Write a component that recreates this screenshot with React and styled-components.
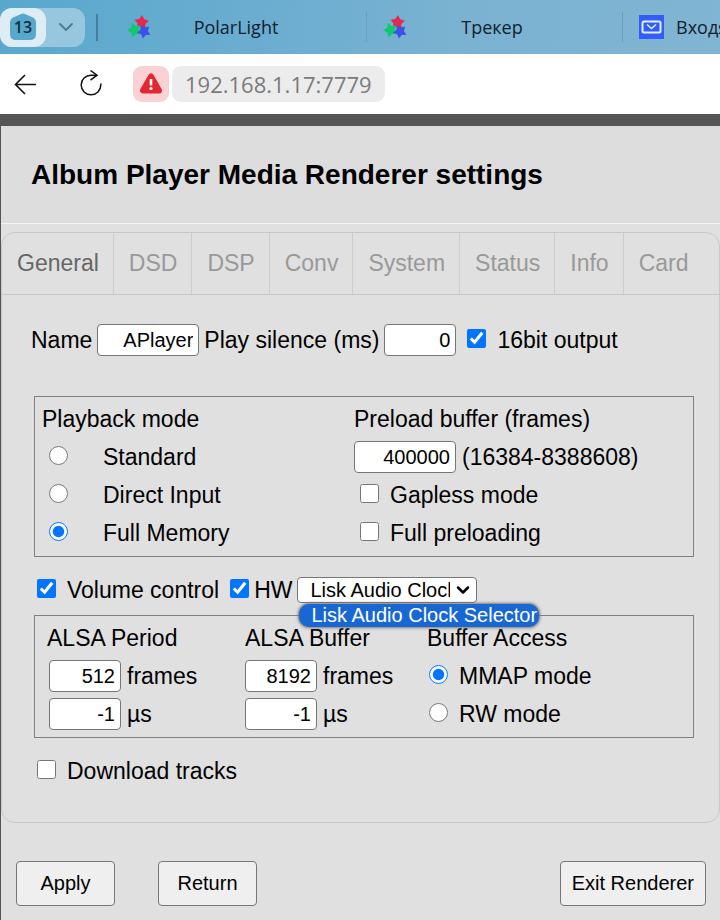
import React from 'react'
import styled, { createGlobalStyle } from 'styled-components';
import { ChevronDown } from 'lucide-react';

const tabs = ['General', 'DSD', 'DSP', 'Conv', 'System', 'Status', 'Info', 'Card'];

// five-pointed star, angle is the direction of the first tip in degrees
const star = (cx, cy, r, angle) => {
  const points = [];
  for (let i = 0; i < 10; i++) {
    const a = ((angle + i * 36) * Math.PI) / 180;
    const radius = i % 2 ? r * 0.55 : r;
    points.push(`${cx + radius * Math.cos(a)},${cy + radius * Math.sin(a)}`);
  }
  return points.join(' ');
}

const StarsIcon = () => (
  <svg width='24' height='24' viewBox='0 0 24 24'>
    <polygon fill='#e5284c' points={star(14.5, 7.5, 7.5, -86)} />
    <polygon fill='#0fc96a' points={star(7.5, 15, 7.5, 178)} />
    <polygon fill='#3d50e8' points={star(17, 16.5, 7.2, -45)} />
  </svg>
)

const BrowserTabs = () => {
  return (
    <TabStrip>
      <Workspace>
        <WorkspaceButton aria-label='Workspace'>
          <Hexagon>
            <svg width='26' height='28' viewBox='0 0 26 28'>
              <path fill='#58a7cc' d='M10.500 1.200a5 5 0 0 1 5 0l8 3.600Q26 6.500 26 9v12q0 6-6 6H6q-6 0-6-6V9q0-2.500 2.500-4.200z' />
            </svg>
            <span>13</span>
          </Hexagon>
        </WorkspaceButton>
        <WorkspaceMenu aria-label='Tab menu'><ChevronDown size={24} strokeWidth={2} /></WorkspaceMenu>
      </Workspace>
      <Divider />
      <BrowserTab><StarsIcon /><TabTitle>PolarLight</TabTitle></BrowserTab>
      <BrowserTab $line><StarsIcon /><TabTitle>Трекер</TabTitle></BrowserTab>
      <BrowserTab $line $left>
        <svg width='25' height='24' viewBox='0 0 25 24'>
          <rect width='25' height='24' fill='#315efb' />
          <rect x='3.500' y='6.500' width='18' height='11' rx='1.500' fill='none' stroke='#e8edff' strokeWidth='2' />
          <path d='M8 9.500l4.500 4 4.500-4' fill='none' stroke='#e8edff' strokeWidth='1.500' />
        </svg>
        <TabTitle $left>Входящие</TabTitle>
      </BrowserTab>
    </TabStrip>
  )
}

const AddressBar = () => {
  return (
    <Toolbar>
      <IconButton aria-label='Back'>
        <svg width='24' height='24' viewBox='0 0 24 24' fill='none' stroke='#111' strokeWidth='1.600'>
          <path d='M12 3l-9.500 9.500L12 22M2.500 12.500H23' />
        </svg>
      </IconButton>
      <IconButton aria-label='Reload'>
        <svg width='24' height='28' viewBox='0 0 24 28' fill='none' stroke='#111' strokeWidth='1.500'>
          <path d='M18 5.200H12A9.800 9.800 0 1 0 21.800 15v-1.500' />
          <path d='M11.500 0.500l6.500 4.700-6.500 5' />
        </svg>
      </IconButton>
      <Warning aria-label='Not secure'>
        <svg width='24' height='22' viewBox='0 0 24 22'>
          <path d='M12 3.500L4 17.500h16z' fill='#e12731' stroke='#e12731' strokeWidth='6' strokeLinejoin='round' />
          <path d='M12 6v6.500' stroke='#fff' strokeWidth='2.600' />
          <circle cx='12' cy='15.500' r='1.600' fill='#fff' />
        </svg>
      </Warning>
      <Address href='http://192.168.1.17:7779'>192.168.1.17:7779</Address>
    </Toolbar>
  )
}

const General = () => {
  return (
    <>
      <Row $first>
        <label htmlFor='name'>Name</label>
        <Field id='name' $wide defaultValue='APlayer' />
        <label htmlFor='silence'>Play silence (ms)</label>
        <Field id='silence' defaultValue='0' />
        <Option $inset><Check type='checkbox' defaultChecked />16bit output</Option>
      </Row>

      <Group $cols='312px 1fr' $indent='7px'>
        <Column>
          <Line>Playback mode</Line>
          <Option $mode><Check type='radio' name='mode' />Standard</Option>
          <Option $mode><Check type='radio' name='mode' />Direct Input</Option>
          <Option $mode><Check type='radio' name='mode' defaultChecked />Full Memory</Option>
        </Column>
        <Column>
          <Line as='label' htmlFor='preload'>Preload buffer (frames)</Line>
          <Line><Field id='preload' $wide defaultValue='400000' />(16384-8388608)</Line>
          <Option $inset><Check type='checkbox' />Gapless mode</Option>
          <Option $inset><Check type='checkbox' />Full preloading</Option>
        </Column>
      </Group>

      <Row>
        <Option><Check type='checkbox' defaultChecked />Volume control</Option>
        <Option $inset $tight><Check type='checkbox' defaultChecked />HW</Option>
        <SelectBox>
          <Select aria-label='Volume control element'>
            <option>Lisk Audio Clock Selector</option>
          </Select>
          <ChevronDown size={20} strokeWidth={3} />
          <Dropdown>Lisk Audio Clock Selector</Dropdown>
        </SelectBox>
      </Row>

      <Group $cols='198px 182px 1fr' $indent='12px'>
        <Column>
          <Line>ALSA Period</Line>
          <Line $pad><Field id='periodFrames' defaultValue='512' /><label htmlFor='periodFrames'>frames</label></Line>
          <Line $pad><Field id='periodTime' defaultValue='-1' /><label htmlFor='periodTime'>µs</label></Line>
        </Column>
        <Column>
          <Line>ALSA Buffer</Line>
          <Line><Field id='bufferFrames' defaultValue='8192' /><label htmlFor='bufferFrames'>frames</label></Line>
          <Line><Field id='bufferTime' defaultValue='-1' /><label htmlFor='bufferTime'>µs</label></Line>
        </Column>
        <Column>
          <Line>Buffer Access</Line>
          <Option $pad><Check type='radio' name='access' defaultChecked />MMAP mode</Option>
          <Option $pad><Check type='radio' name='access' />RW mode</Option>
        </Column>
      </Group>

      <Row $last>
        <Option><Check type='checkbox' />Download tracks</Option>
      </Row>
    </>
  )
}

const App = () => {
  return (
    <>
      <GlobalStyle />
      <BrowserTabs />
      <AddressBar />
      <Page>
        <Header><h1>Album Player Media Renderer settings</h1></Header>
        <Panel>
          <Nav>
            {tabs.map((tab, i) => (
              <NavButton key={tab} $active={i === 0}>{tab}</NavButton>
            ))}
          </Nav>
          <General />
        </Panel>
        <Footer>
          <Button>Apply</Button>
          <Button>Return</Button>
          <Button $right>Exit Renderer</Button>
        </Footer>
      </Page>
    </>
  )
}

const GlobalStyle = createGlobalStyle`
  * {
    box-sizing: border-box;
  }
  body {
    margin: 0;
    background: #e0e0e0;
    color: #000;
    font-family: "Liberation Sans", Arial, sans-serif;
    font-size: 23px;
    line-height: 26px;
  }
  button {
    font-family: inherit;
    padding: 0;
    border: 0;
    background: none;
  }
`;
const TabStrip = styled.div`
  display: flex;
  align-items: center;
  height: 54px;
  overflow: hidden;
  background: linear-gradient(100deg, #58a8ce, #6aadd0 35%, #7bb2d1 65%, #80b5d3);
  font-family: "Open Sans", "Noto Sans", sans-serif;
  font-size: 18px;
  color: #10212b;
`;
const Workspace = styled.div`
  display: flex;
  flex: none;
  width: 85px;
  height: 39px;
  border-radius: 12px;
  background: #97c7df;
`;
const WorkspaceButton = styled.button`
  width: 46px;
  border-radius: 12px;
  background: #deedf5;
`;
const Hexagon = styled.span`
  display: grid;
  place-items: center;
  font-family: "Open Sans", sans-serif;
  font-size: 16px;
  font-weight: 600;
  color: #12303e;
  > * {
    grid-area: 1 / 1;
  }
`;
const WorkspaceMenu = styled.button`
  flex: 1;
  display: grid;
  place-items: center;
  color: #4c7e96;
`;
const Divider = styled.div`
  flex: none;
  width: 2px;
  height: 27px;
  margin: 0 12px 0 11px;
  background: #447f9c;
`;
const BrowserTab = styled.div`
  flex: none;
  display: flex;
  align-items: center;
  width: 256px;
  height: 30px;
  padding-left: 16px;
  padding-right: ${({ $left }) => ($left ? 0 : '45px')};
  border-left: 1px solid ${({ $line }) => ($line ? '#6a9fbc' : 'transparent')};
`;
const TabTitle = styled.span`
  flex: 1;
  text-align: ${({ $left }) => ($left ? 'left' : 'center')};
  margin-left: ${({ $left }) => ($left ? '12px' : 0)};
`;
const Toolbar = styled.div`
  display: flex;
  align-items: center;
  height: 60px;
  padding-left: 10px;
  background: #fff;
`;
const IconButton = styled.button`
  display: grid;
  place-items: center;
  width: 30px;
  height: 36px;
  margin-right: 36px;
`;
const Warning = styled.button`
  display: grid;
  place-items: center;
  width: 36px;
  height: 36px;
  margin-left: -9px;
  border-radius: 9px;
  background: #fad2d4;
`;
const Address = styled.a`
  height: 36px;
  margin-left: 3px;
  padding: 0 13px;
  border-radius: 9px;
  background: #ececec;
  color: #7b7b7b;
  font-family: "Open Sans", "Noto Sans", sans-serif;
  font-size: 22px;
  line-height: 36px;
  text-decoration: none;
`;
const Page = styled.main`
  border-top: 12px solid #555;
  border-left: 1px solid #555;
`;
const Header = styled.header`
  padding: 32px 30px;
  border-bottom: 1px solid #f4f4f4;
  background: #ddd;
  h1 {
    margin: 0;
    font-size: 28px;
    line-height: 33px;
  }
`;
const Panel = styled.section`
  margin-top: 8px;
  border: 1px solid #c8c8c8;
  border-radius: 14px;
`;
const Nav = styled.nav`
  display: flex;
  height: 62px;
  border-bottom: 1px solid #c8c8c8;
`;
const NavButton = styled.button`
  padding: 0 14px 0 15px;
  border-right: 1px solid #ccc;
  font-size: 23px;
  color: ${({ $active }) => ($active ? '#666' : '#999')};
  &:last-child {
    border-right: 0;
  }
`;
const Row = styled.div`
  display: flex;
  align-items: center;
  gap: 5px;
  height: 38px;
  margin: ${({ $first, $last }) => ($first ? '26px 0 37px 29px' : $last ? '14px 0 32px 35px' : '14px 0 6px 35px')};
`;
const Group = styled.div`
  display: grid;
  grid-template-columns: ${({ $cols }) => $cols};
  margin: 0 25px 0 32px;
  padding: 3px 0 4px ${({ $indent }) => $indent};
  border: 1px solid #808080;
`;
const Column = styled.div`
  display: flex;
  flex-direction: column;
`;
const Line = styled.div`
  display: flex;
  align-items: center;
  gap: 6px;
  height: 38px;
  padding-left: ${({ $pad }) => ($pad ? '2px' : 0)};
`;
const Option = styled.label`
  display: flex;
  align-items: center;
  height: 38px;
  gap: ${({ $mode, $tight }) => ($mode ? '35px' : $tight ? '5px' : '11px')};
  padding-left: ${({ $mode, $inset, $pad }) => ($mode ? '7px' : $inset ? '6px' : $pad ? '2px' : 0)};
`;
const Check = styled.input`
  flex: none;
  width: 19px;
  height: 19px;
  margin: 0 0 4px;
  accent-color: #0075ff;
`;
const Field = styled.input`
  width: ${({ $wide }) => ($wide ? '102px' : '72px')};
  height: 32px;
  padding: 0 5px;
  border: 1px solid #767676;
  border-radius: 4px;
  background: #fff;
  font-family: inherit;
  font-size: 20px;
  text-align: right;
`;
const SelectBox = styled.div`
  position: relative;
  svg {
    position: absolute;
    top: 3px;
    right: 4px;
    pointer-events: none;
  }
`;
const Select = styled.select`
  display: block;
  appearance: none;
  width: 180px;
  height: 26px;
  padding: 0 26px 0 12px;
  border: 1px solid #767676;
  border-radius: 4px;
  background: #fff;
  color: #000;
  font-family: inherit;
  font-size: 20px;
`;
const Dropdown = styled.div`
  position: absolute;
  top: 27px;
  left: 2px;
  padding: 0 2px 0 12px;
  border-radius: 10px;
  background: #1967d2;
  box-shadow: 0 0 3px 1px #777;
  color: #fff;
  font-size: 20px;
  line-height: 23px;
  white-space: nowrap;
`;
const Footer = styled.footer`
  display: flex;
  gap: 43px;
  padding: 38px 14px 14px 15px;
`;
const Button = styled.button`
  min-width: 99px;
  height: 45px;
  padding: 0 11px;
  margin-left: ${({ $right }) => ($right ? 'auto' : 0)};
  border: 1px solid #767676;
  border-radius: 4px;
  background: #efefef;
  font-size: 20px;
`;
export default App
